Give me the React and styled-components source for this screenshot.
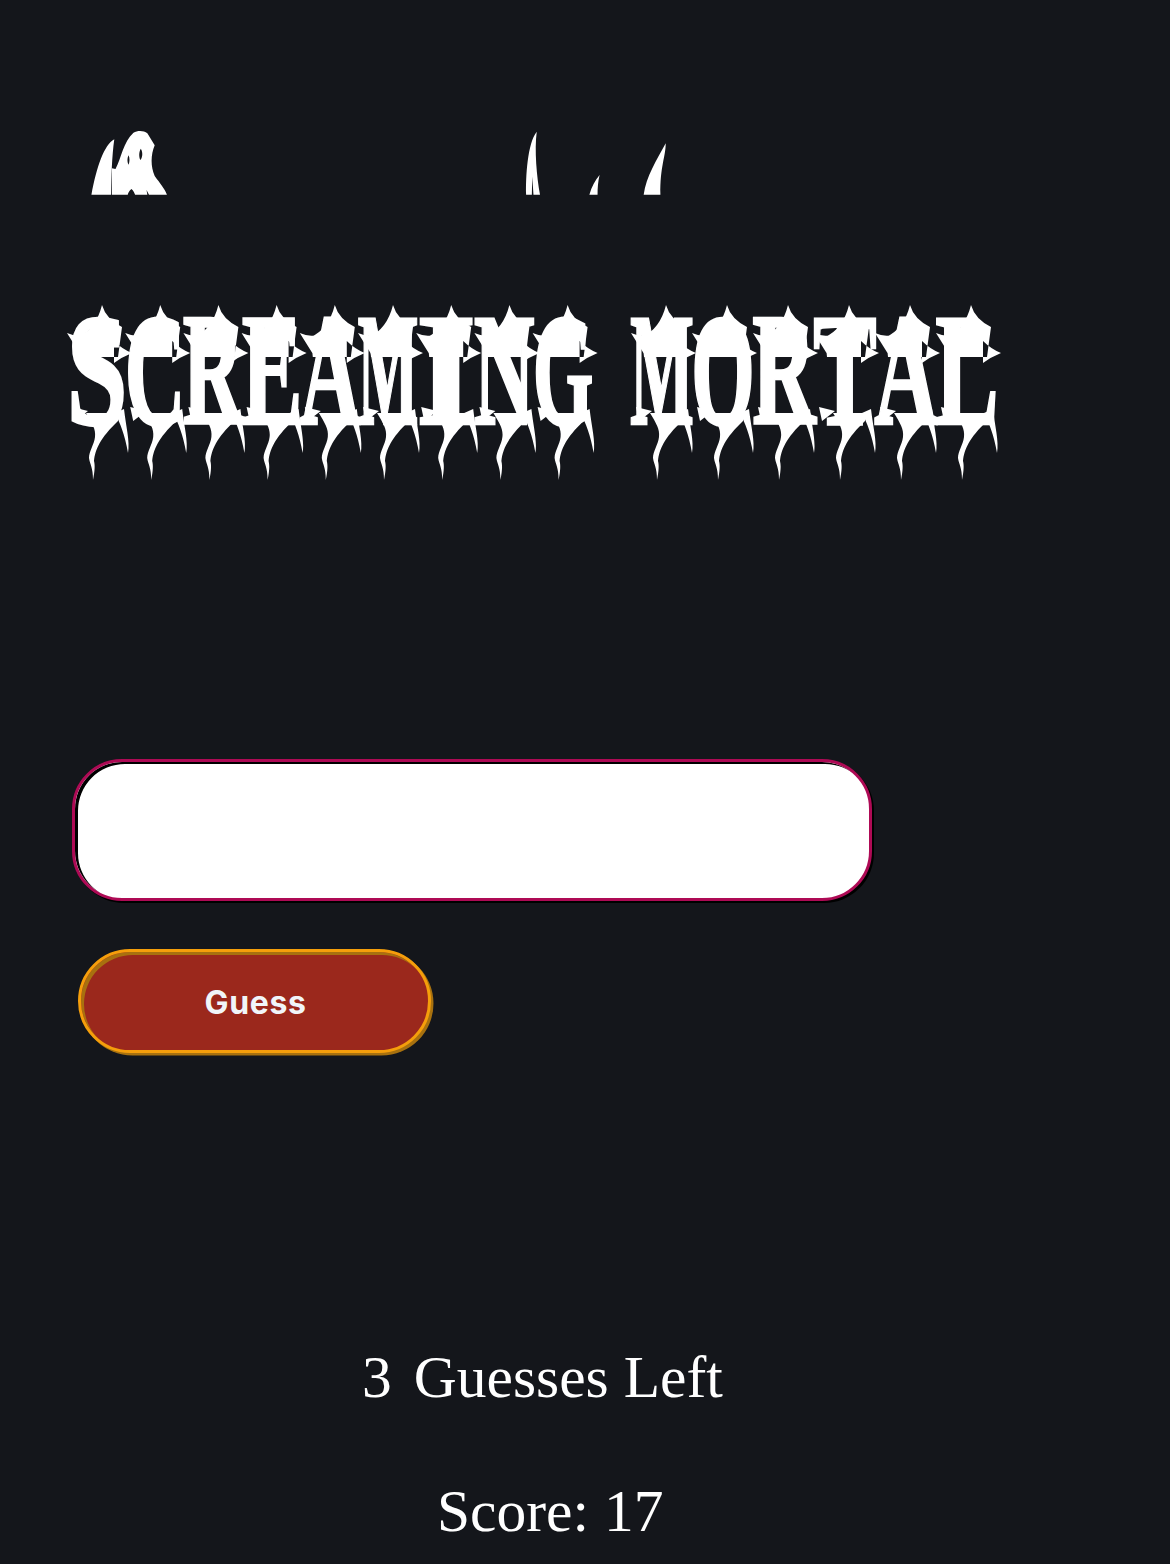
import React from "react";
import styled, { createGlobalStyle } from "styled-components";

const Global = createGlobalStyle`
  html, body { margin: 0; padding: 0; background: #14161b; }
  #root { width: 1170px; }
`;

const Page = styled.main`
  box-sizing: border-box;
  width: 1170px;
  height: 1564px;
  overflow: hidden;
  padding: 120px 0 0 60px;
  background: #14161b;
  color: #fff;
  display: flex;
  flex-direction: column;
  align-items: flex-start;
`;

const ClippedHeading = styled.svg`
  display: block;
  width: 640px;
  height: 90px;
  flex: none;
`;

const TitleBlock = styled.div`
  position: relative;
  width: 1000px;
  height: 195px;
  margin-top: 85px;
  flex: none;
`;

const Title = styled.h1`
  margin: 0;
  padding: 25px 0 0 8px;
  display: flex;
  gap: 40px;
  font: 700 108px/100px "Liberation Serif", serif;
  color: #fff;
  -webkit-text-stroke: 1.5px #fff;
`;

const Word = styled.span`
  display: flex;
`;

const Cell = styled.span`
  display: flex;
  justify-content: center;
  width: ${(p) => p.$pitch}px;
  height: 100px;
`;

const Glyph = styled.span`
  display: block;
  flex: none;
  transform: scale(${(p) => p.$sx}, 1.5);
  transform-origin: 50% 50%;
`;

const TitleDrips = styled.svg`
  position: absolute;
  left: 0;
  top: 0;
  width: 1000px;
  height: 195px;
`;

const GuessInput = styled.input`
  box-sizing: border-box;
  display: block;
  flex: none;
  width: 800px;
  height: 142px;
  margin: 269px 0 0 12px;
  padding: 0 40px;
  border: 3px solid #ae0a55;
  border-radius: 50px;
  background: #fff;
  outline: none;
  box-shadow: 2px 2px 0 #000, inset 3px 2px 0 #000;
`;

const GuessButton = styled.button`
  box-sizing: border-box;
  display: block;
  flex: none;
  width: 353px;
  height: 104px;
  margin: 48px 0 0 18px;
  padding: 4px 0 0 2px;
  border: 3px solid #f59e0b;
  border-radius: 54px;
  background: #9b281c;
  color: #f1f5f9;
  font: 700 32px/1 Inter, sans-serif;
  letter-spacing: 0.6px;
  box-shadow: 2.5px 2.5px 0 #a8710f, inset 3px 3px 0 #a8710f;
`;

const GuessesLeft = styled.p`
  display: flex;
  gap: 22px;
  margin: 291px 0 0 302px;
  font: 400 59.5px/66px "Liberation Serif", serif;
`;

const Score = styled.p`
  margin: 68px 0 0 377px;
  font: 400 59.5px/66px "Liberation Serif", serif;
`;

const ADV = { S: 0.556, C: 0.722, R: 0.722, E: 0.667, A: 0.722, M: 0.944, I: 0.389, N: 0.722, G: 0.778, O: 0.778, T: 0.667, L: 0.667 };
const FONT = 108;
const WORDS = [
  { text: "SCREAMING", pitch: 58.2, start: 8 },
  { text: "MORTAL", pitch: 61, start: 572 },
];

const letterX = WORDS.flatMap((w) => [...w.text].map((c, i) => w.start + i * w.pitch));

function dripPath(L) {
  const p = (dx) => (L + dx).toFixed(1);
  return [
    // crown spike
    `M${p(10)} 42 Q${p(28)} 34 ${p(34)} 10 Q${p(38)} 24 ${p(54)} 32 L${p(50)} 62 L${p(12)} 62 Z`,
    // side thorns
    `M${p(-1)} 38 Q${p(8)} 42 ${p(16)} 40 L${p(14)} 62 Z`,
    `M${p(64)} 58 Q${p(54)} 54 ${p(46)} 46 L${p(46)} 68 Q${p(54)} 62 ${p(64)} 58 Z`,
    // long drip
    `M${p(18)} 118 C${p(24)} 128 ${p(28)} 134 ${p(27)} 142 C${p(26)} 150 ${p(21)} 156 ${p(21)} 163 C${p(22)} 170 ${p(25)} 172 ${p(25)} 185 C${p(27)} 175 ${p(27)} 170 ${p(26)} 166 C${p(27)} 155 ${p(32)} 143 ${p(50)} 126 L${p(50)} 118 Z`,
    // short drip
    `M${p(47)} 118 C${p(52)} 128 ${p(57)} 140 ${p(60)} 158 C${p(62)} 146 ${p(58)} 132 ${p(56)} 114 Z`,
    // left leg
    `M${p(4)} 112 L${p(7)} 126 L${p(20)} 116 Z`,
  ].join(" ");
}

export default function App() {
  return (
    <Page>
      <Global />
      <ClippedHeading viewBox="0 0 1568 270" preserveAspectRatio="none" aria-hidden="true">
        <path fill="#fff" d="M77 224 C90 140 108 75 133 58 C127 110 126 170 125 224 Z" />
        <path
          fill="#fff"
          fillRule="evenodd"
          d="M127 145 L136 147 C150 115 155 65 180 38 C190 31 205 31 214 40 L232 76 C222 105 222 140 232 168 C245 190 256 205 262 224 L127 224 Z M198 86 C193 95 193 112 197 120 C203 112 203 95 198 86 Z M168 106 C164 115 165 128 168 134 C171 125 171 115 168 106 Z M175 207 C170 212 167 218 166 224 L184 224 C182 218 180 212 175 207 Z M212 210 L214 224 L218 224 Z"
        />
        <path
          fill="#fff"
          d="M1142 224 C1141 170 1145 70 1168 35 C1162 90 1168 170 1176 224 L1160 224 L1157 170 L1156 224 Z"
        />
        <path fill="#fff" d="M1297 224 C1302 200 1312 180 1322 165 C1318 185 1317 205 1317 224 Z" />
        <path fill="#fff" d="M1430 224 C1436 170 1462 120 1484 70 C1484 110 1470 140 1471 224 Z" />
      </ClippedHeading>
      <TitleBlock>
        <Title>
          {WORDS.map((w) => (
            <Word key={w.text}>
              {[...w.text].map((c, i) => (
                <Cell key={i} $pitch={w.pitch}>
                  <Glyph $sx={((w.pitch + 3) / (ADV[c] * FONT)).toFixed(3)}>{c}</Glyph>
                </Cell>
              ))}
            </Word>
          ))}
        </Title>
        <TitleDrips viewBox="0 0 1000 195" aria-hidden="true">
          {letterX.map((L) => (
            <path key={L} fill="#fff" d={dripPath(L)} />
          ))}
        </TitleDrips>
      </TitleBlock>
      <GuessInput type="text" aria-label="Guess" />
      <GuessButton type="button">Guess</GuessButton>
      <GuessesLeft>
        <span>3</span>
        <span>Guesses Left</span>
      </GuessesLeft>
      <Score>Score: 17</Score>
    </Page>
  );
}
